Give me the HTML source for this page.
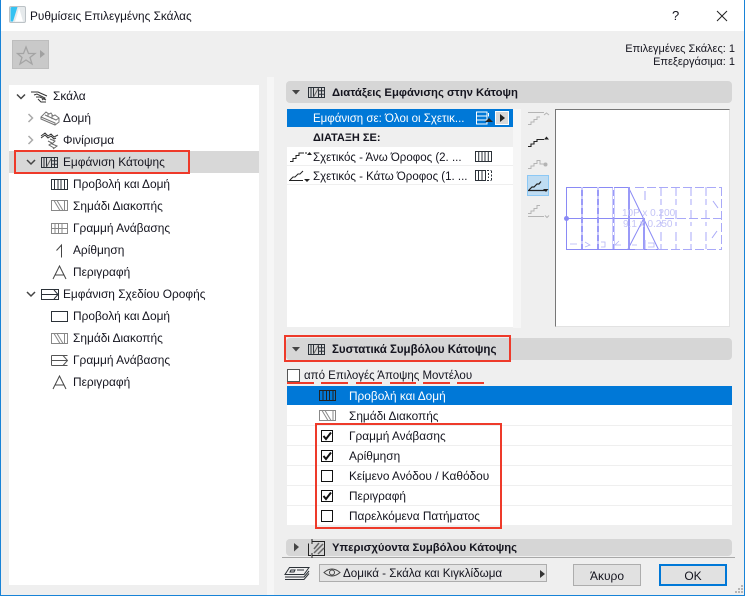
<!DOCTYPE html>
<html lang="el"><head><meta charset="utf-8"><style>
html,body{margin:0;padding:0}
body{width:745px;height:596px;position:relative;overflow:hidden;background:#efefef;font:12px/16px "Liberation Sans","DejaVu Sans",sans-serif;color:#14141e}
.a{position:absolute}
.t{position:absolute;white-space:nowrap;height:16px}
.tr{font-size:11.9px}
.ls{font-size:11.85px}
.b{font-weight:bold}
.w{color:#fff}
svg{position:absolute;left:0;top:0}
</style></head><body>
<div class="a" style="left:0;top:0;width:745px;height:31px;background:#fff"></div>
<div class="a" style="left:267px;top:77px;width:7px;height:518px;background:#f6f6f6"></div>
<div class="a" style="left:9px;top:85px;width:250px;height:500px;background:#fff"></div>
<div class="a" style="left:9px;top:151px;width:250px;height:22px;background:#d8d8d8"></div>
<div class="a" style="left:12px;top:40px;width:35px;height:27px;background:#c9c9c9;border:1px solid #bdbdbd"></div>

<div class="a" style="left:286px;top:81px;width:446px;height:22px;background:#d6d6d6;border-radius:4px"></div>
<div class="a" style="left:286px;top:338px;width:446px;height:22px;background:#d6d6d6;border-radius:4px"></div>
<div class="a" style="left:286px;top:539px;width:446px;height:17px;background:#d6d6d6;border-radius:4px"></div>
<div class="a" style="left:282px;top:557px;width:453px;height:1px;background:#a8a8a8"></div>

<div class="a" style="left:287px;top:147px;width:226px;height:180px;background:#fff"></div>
<div class="a" style="left:287px;top:109px;width:226px;height:18px;background:#0078d7"></div>
<div class="a" style="left:287px;top:165px;width:226px;height:1px;background:#efefef"></div>
<div class="a" style="left:287px;top:184px;width:226px;height:1px;background:#efefef"></div>
<div class="a" style="left:513px;top:109px;width:8px;height:219px;background:#f6f6f6"></div>
<div class="a" style="left:527px;top:175px;width:20px;height:19px;background:#bfdcf2;border:1px solid #8cc8f5"></div>
<div class="a" style="left:555px;top:109px;width:173px;height:216px;background:#fff;border-top:1px solid #777;border-left:1px solid #777;border-right:1px solid #e2e2e2;border-bottom:1px solid #e2e2e2"></div>

<div class="a" style="left:287px;top:386px;width:445px;height:139px;background:#fff"></div>
<div class="a" style="left:287px;top:386px;width:445px;height:19px;background:#0078d7"></div>
<div class="a" style="left:287px;top:425px;width:445px;height:1px;background:#efefef"></div>
<div class="a" style="left:287px;top:445px;width:445px;height:1px;background:#efefef"></div>
<div class="a" style="left:287px;top:465px;width:445px;height:1px;background:#efefef"></div>
<div class="a" style="left:287px;top:485px;width:445px;height:1px;background:#efefef"></div>
<div class="a" style="left:287px;top:505px;width:445px;height:1px;background:#efefef"></div>

<div class="a" style="left:319px;top:564px;width:226px;height:16px;background:#e4e4e4;border:1px solid #adadad"></div>
<div class="a" style="left:573px;top:564px;width:66px;height:20px;background:#e1e1e1;border:1px solid #adadad"></div>
<div class="a" style="left:659px;top:564px;width:64px;height:18px;background:#e1e1e1;border:2px solid #0078d7"></div>

<svg width="745" height="596" viewBox="0 0 745 596" fill="none">
<!-- window border -->
<path d="M.5 0V595.5H745M744.5 0V596" stroke="#1883d7"/>
<!-- close -->
<path d="M717 11L727 21M727 11L717 21" stroke="#222" stroke-width="1"/>
<!-- app icon -->
<rect x="9.500" y="6.500" width="16" height="16" rx="1.500" fill="#e6eaec" stroke="#bcc2c6"/>
<path d="M10.500 21.500V8Q10.500 7 12 7H17.500Q15 15 13 21.500Z" fill="#35c2f2"/><path d="M15 21.500Q17.500 14 19 8Q21 14 23 21.500Z" fill="#fff"/>
<!-- star -->
<path d="M26 47L28.500 53.500L35 53.500L30 57.500L32 64L26 60L20 64L22 57.500L17.500 53.500L23.500 53.500Z" stroke="#a4a4a4" stroke-width="1.300"/>
<path d="M40 50L45 54L40 58Z" fill="#a0a0a0"/>
<!-- tree chevrons -->
<g stroke="#444" stroke-width="1.500"><path d="M17 94.500L21 98.500L25 94.500"/><path d="M27 160L31 164L35 160"/><path d="M27 292L31 296L35 292"/></g>
<g stroke="#aaa" stroke-width="1.500"><path d="M28.500 114L32.500 118L28.500 122"/><path d="M28.500 136L32.500 140L28.500 144"/></g>
<!-- Skala icon -->
<g stroke="#333" stroke-width="1"><path d="M31 92H38L47 96M34 95L37 94L45 98L42 100M36 97H40L46 100M38 99L41 102H46"/></g>
<!-- Domi icon -->
<g stroke="#777" stroke-width="1"><path d="M41 117L46 112L49 114L51 113L53 116L55 115L59 118V122L55 125L41 119ZM41 117L55 123V125M45 115L56 120L59 118M48 113V117M52 115V119"/></g>
<!-- Finirisma icon -->
<g stroke="#333" stroke-width="1"><path d="M41 136L45 133L48 136L51 134L54 137L58 135M41 138L45 135L48 138L51 136L54 139L56 138"/><path d="M50 139L55 141L52 144L57 146L53 149M48 141L52 143L49 145L54 148" stroke="#666"/></g>
<g stroke="#2b3138" stroke-width="1">
<!-- plan icons in headers and tree -->
<path d="M41.500 157.500H57.500V167.500H41.500ZM46.500 157.500V167.500M51.500 157.500V167.500M54.500 157.500V167.500M51.500 160.800H57.500M51.500 164.200H57.500M44 158V167"/><path d="M46.500 167L51.500 158" stroke="#666"/>
<path d="M308.500 87.500H324.500V97.500H308.500ZM313.500 87.500V97.500M318.500 87.500V97.500M321.500 87.500V97.500M318.500 90.800H324.500M318.500 94.200H324.500M311 88V97"/><path d="M313.500 97L318.500 88" stroke="#666"/>
<path d="M308.500 344.500H324.500V354.500H308.500ZM313.500 344.500V354.500M318.500 344.500V354.500M321.500 344.500V354.500M318.500 347.800H324.500M318.500 351.200H324.500M311 345V354"/><path d="M313.500 354L318.500 345" stroke="#666"/>
<!-- Provoli -->
<path d="M51.500 179.500H67.500V189.500H51.500ZM54.500 180V189M58 180V189M61 180V189M64.500 180V189"/>
<path d="M475.500 151.500H491.500V161.500H475.500ZM478.700 152V161M482 152V161M485 152V161M488.300 152V161"/>
<path d="M475.500 170.500H485.500V180.500H475.500ZM478.500 171V180M482 171V180"/>
<path d="M487 170.500H491.500M487 180.500H491.500M491.500 171V180M488.500 173V178" stroke-dasharray="2 1.500"/>
<path d="M319.500 390.500H335.500V400.500H319.500ZM323 391V400M326.500 391V400M329.500 391V400M333 391V400" stroke="#222"/>
<!-- Sx. Orofis -->
<path d="M41.500 289.500H58.500V299.500H41.500ZM41.500 294.500H57.500M54 290L58 294.500L54 299"/>
<path d="M51.500 311.500H67.500V321.500H51.500Z"/>
<path d="M51.500 355.500H67.500M51.500 365.500H67.500M51.500 355.500V365.500M51.500 360.500H67.500M63 355.500L67.500 360.500L63 365.500" stroke="#555"/>
</g>
<!-- gray hatch icons -->
<g stroke="#888" stroke-width="1">
<path d="M51.500 200.500H67.500V210.500H51.500ZM54 200.500L60 210.500M57 200.500L63 210.500M64.500 200.500V210.500"/>
<path d="M51.500 223.500H67.500V233.500H51.500ZM51.500 228.500H67.500M55 223.500V233.500M58.500 223.500V233.500M62 223.500V233.500"/>
<path d="M51.500 333.500H67.500V343.500H51.500ZM54 333.500L60 343.500M57 333.500L63 343.500M64.500 333.500V343.500"/>
<path d="M319.500 410.500H335.500V420.500H319.500ZM322 410.500L328 420.500M325 410.500L331 420.500M333 410.500V420.500"/>
</g>
<!-- numbering / A -->
<g stroke="#444" stroke-width="1">
<path d="M56.500 250.500L61.500 245V257.500"/>
<path d="M53 279L59.500 266L66 279M55 275H64"/>
<path d="M53 389L59.500 376L66 389M55 385H64"/>
</g>
<!-- section arrows -->
<path d="M292 90L300 90L296 94.500Z" fill="#444"/><path d="M292 347L300 347L296 351.500Z" fill="#444"/><path d="M294 543L299 547L294 551.500Z" fill="#444"/>
<!-- override icon -->
<path d="M312 541.500H324.500V555.500H312M312 539V544M308.500 543.500V555.500H311M312 553V558" stroke="#222"/><path d="M314 553L323 544M318 554L324 548M314 549L319 543" stroke="#666" stroke-width="1.500"/>
<!-- list icons row 1 -->
<g stroke="#fff" stroke-width="1"><path d="M476.500 112H487V124H476.500ZM476.500 116H487M476.500 120H487"/></g>
<path d="M485 122L489 118L493 122Z" fill="#222"/><path d="M488.500 113V116.500" stroke="#fff"/>
<rect x="495.500" y="111.500" width="13" height="13" fill="#d8d8d8" stroke="#fff"/><path d="M500 114L505 118L500 122Z" fill="#222"/>
<!-- stair icons list -->
<g stroke="#222" stroke-width="1">
<path d="M290 161.500H293V158.500H296V155.500H299V153H304"/><path d="M305 153H307"/>
<path d="M289 180.500H303M290 180L293 177H295L298 174H300L303 171"/>
</g>
<path d="M307 155L309.500 152L312 155Z" fill="#222"/><path d="M304 179L307 182L310 179Z" fill="#222"/>
<!-- stair buttons -->
<g stroke="#b4b4b4" stroke-width="1"><path d="M528 112.500H544M528 124.500H531V122H534V119.500H537V117H540"/><path d="M544 115L546.500 113L549 115"/>
<path d="M528 168.500H531V166H534V163.500H537V160.500H540V164H544"/><circle cx="545.500" cy="164.500" r="1.500" fill="#b4b4b4"/>
<path d="M528 213.500H531V211H534V208.500H537V205.500H540M528 216.500H544M545 215.500L547 217.500L549 215.500"/></g>
<path d="M528 146.500H531V144H534V141.500H537V139.500H544" stroke="#222" stroke-width="1.100"/><path d="M544 139.500L546.500 136.500L549 139.500Z" fill="#222"/>
<path d="M528 190.500H545M529 190L532 187H534L537 184H539L541 181.500" stroke="#222" stroke-width="1.200"/><path d="M543 189L546 192L548.500 189Z" fill="#222"/>
<!-- preview stair -->
<g stroke="#8a8af5" stroke-width="1">
<path d="M566.500 187.500H628.500M566.500 249.500H658.500M566.500 187V250M567 218.500H644M628.500 187.500L658.500 249.500M644 218L628 249"/>
</g>
<g stroke="#9a9af8" stroke-width="2">
<path d="M582 187V249M598 187V249M613.500 187V249M629 187V249M644 218V249"/>
</g>
<g stroke="#fff" stroke-width="1" stroke-dasharray="3 6"><path d="M582 187V249M598 187V249M613.500 187V249"/></g>
<circle cx="566.500" cy="218.500" r="2.500" fill="#8a8af5"/>
<g stroke="#a9a9f8" stroke-width="1" stroke-dasharray="9 3">
<path d="M635 187.500H722M635 249.500H722M721.500 187V250"/>
<path d="M645 191V202M661 187V205M676 187V205M691 187V205M706 187V205M645 240V250M661 232V249M676 232V249M691 232V249M706 232V249M661 210V226M676 210V226M691 210V226M706 210V226M665 218.500H722M713 201L718 208M717 231L712 238"/>
</g>
<g stroke="#b4b4f6" stroke-width=".8"><path d="M570 244H577M585 242L590 245L585 247M601 242H605V247H601M619 241L615 245H621M632 245H637M648 243H654V247H648"/></g>
<!-- checkboxes -->
<g stroke="#111" fill="#fff"><rect x="287.500" y="369.500" width="12" height="12" stroke="#555"/><rect x="321.500" y="430.500" width="11" height="11"/><rect x="321.500" y="450.500" width="11" height="11"/><rect x="321.500" y="470.500" width="11" height="11"/><rect x="321.500" y="490.500" width="11" height="11"/><rect x="321.500" y="510.500" width="11" height="11"/></g>
<g stroke="#111" stroke-width="2"><path d="M323.500 436L326 439L331 432.500M323.500 456L326 459L331 452.500M323.500 496L326 499L331 492.500"/></g>
<!-- red -->
<g stroke="#ee3a2a" stroke-width="2">
<rect x="15" y="151" width="174" height="22" />
<rect x="285" y="336" width="225" height="25"/>
<rect x="316" y="424" width="185" height="104"/>
<path d="M287 383H314M321 383H348M356 383H382M390 383H416M423 383H450M457 383H484"/>
</g>
<!-- bottom left layers -->
<g stroke="#2c3238" stroke-width="1"><path d="M289.500 567.500H309L304 574.500H285ZM285 577H304L309 571M285 579.500H304L309 573.500M291 570H295L294 572H290ZM297 570H304"/></g>
<!-- eye -->
<path d="M324 572.500Q332 565.500 340 572.500Q332 579.500 324 572.500Z" stroke="#444"/><circle cx="332" cy="572.500" r="2.500" stroke="#444"/>
<path d="M540 570L545 574L540 578Z" fill="#333"/>
<!-- grip -->
<g fill="#b5b5b5"><rect x="741" y="585" width="2" height="2"/><rect x="741" y="588" width="2" height="2"/><rect x="741" y="591" width="2" height="2"/><rect x="738" y="588" width="2" height="2"/><rect x="738" y="591" width="2" height="2"/><rect x="735" y="591" width="2" height="2"/></g>
<!-- preview text -->
<text x="622" y="216" font-family="Liberation Sans" font-size="10" fill="#c4c4f6">10P x 0.200</text>
<text x="623" y="227" font-family="Liberation Sans" font-size="10" fill="#c4c4f6">9.1 x 0.250</text>
</svg>

<div class="t" style="left:30px;top:8px;font-size:11.8px">Ρυθμίσεις Επιλεγμένης Σκάλας</div>
<div class="t" style="left:672px;top:8px;font-size:13px">?</div>
<div class="t" style="right:10px;top:41px;font-size:11px">Επιλεγμένες Σκάλες: 1</div>
<div class="t" style="right:10px;top:54px;font-size:11px">Επεξεργάσιμα: 1</div>

<div class="t tr" style="left:53px;top:88px">Σκάλα</div>
<div class="t tr" style="left:63px;top:110px">Δομή</div>
<div class="t tr" style="left:63px;top:132px">Φινίρισμα</div>
<div class="t tr" style="left:63px;top:154px">Εμφάνιση Κάτοψης</div>
<div class="t tr" style="left:73px;top:176px">Προβολή και Δομή</div>
<div class="t tr" style="left:73px;top:198px">Σημάδι Διακοπής</div>
<div class="t tr" style="left:73px;top:220px">Γραμμή Ανάβασης</div>
<div class="t tr" style="left:73px;top:242px">Αρίθμηση</div>
<div class="t tr" style="left:73px;top:264px">Περιγραφή</div>
<div class="t tr" style="left:63px;top:286px">Εμφάνιση Σχεδίου Οροφής</div>
<div class="t tr" style="left:73px;top:308px">Προβολή και Δομή</div>
<div class="t tr" style="left:73px;top:330px">Σημάδι Διακοπής</div>
<div class="t tr" style="left:73px;top:352px">Γραμμή Ανάβασης</div>
<div class="t tr" style="left:73px;top:374px">Περιγραφή</div>

<div class="t b" style="left:332px;top:85px;font-size:11.3px">Διατάξεις Εμφάνισης στην Κάτοψη</div>
<div class="t w" style="left:313px;top:111px;font-size:11.500px">Εμφάνιση σε: Όλοι οι Σχετικ...</div>
<div class="t b" style="left:313px;top:130px;font-size:11px">ΔΙΑΤΑΞΗ ΣΕ:</div>
<div class="t" style="left:313px;top:150px;font-size:11.500px">Σχετικός - Άνω Όροφος (2. ...</div>
<div class="t" style="left:313px;top:169px;font-size:11.500px">Σχετικός - Κάτω Όροφος (1. ...</div>

<div class="t b" style="left:332px;top:342px;font-size:11.500px">Συστατικά Συμβόλου Κάτοψης</div>
<div class="t" style="left:304px;top:368px;font-size:11.500px">από Επιλογές Άποψης Μοντέλου</div>
<div class="t w ls" style="left:349px;top:388px">Προβολή και Δομή</div>
<div class="t ls" style="left:349px;top:408px">Σημάδι Διακοπής</div>
<div class="t ls" style="left:349px;top:428px">Γραμμή Ανάβασης</div>
<div class="t ls" style="left:349px;top:448px">Αρίθμηση</div>
<div class="t ls" style="left:349px;top:468px">Κείμενο Ανόδου / Καθόδου</div>
<div class="t ls" style="left:349px;top:488px">Περιγραφή</div>
<div class="t ls" style="left:349px;top:508px">Παρελκόμενα Πατήματος</div>

<div class="t b" style="left:332px;top:540px;font-size:11.3px">Υπερισχύοντα Συμβόλου Κάτοψης</div>
<div class="t" style="left:343px;top:566px;font-size:11.650px">Δομικά - Σκάλα και Κιγκλίδωμα</div>
<div class="t" style="left:573px;top:568px;width:68px;text-align:center">Άκυρο</div>
<div class="t" style="left:659px;top:568px;width:68px;text-align:center">OK</div>
</body></html>
